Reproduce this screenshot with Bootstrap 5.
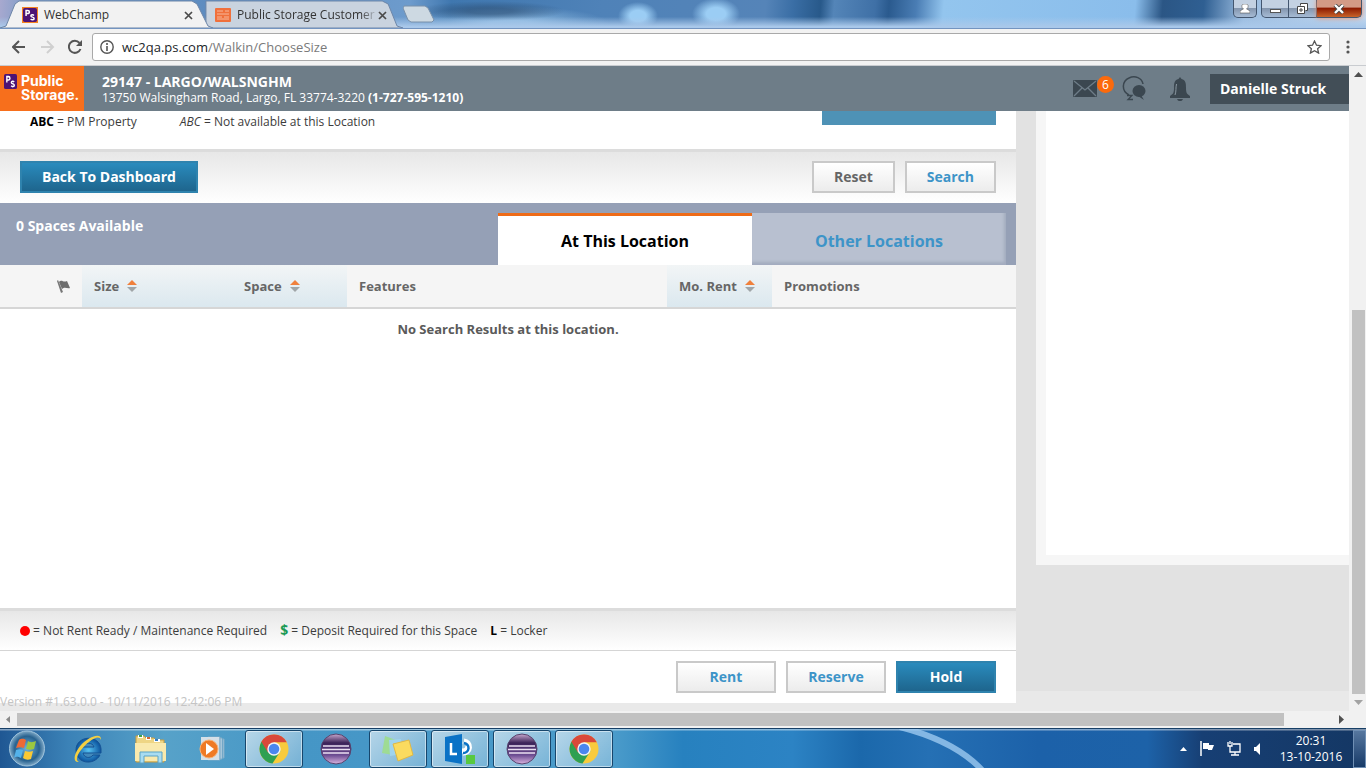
<!DOCTYPE html>
<html lang="en">
<head>
<meta charset="utf-8">
<meta name="viewport" content="width=device-width, initial-scale=1">
<title>WebChamp</title>
<link href="https://cdn.jsdelivr.net/npm/bootstrap@5.3.0/dist/css/bootstrap.min.css" rel="stylesheet">
<style>
  body { font-family: "Open Sans", "Noto Sans", sans-serif; font-size: 12px; line-height: 16px; color: #3c3c3c; background: #e2e2e2; }
  svg { display: block; flex: none; }
  button { font-family: inherit; }
  .plain { border: 0; background: none; padding: 0; }

  /* browser frame */
  .titlebar { height: 29px; flex: none; border-bottom: 1px solid #7394c0;
    background:
      linear-gradient(to bottom, transparent 60%, #a9c8ea 95%),
      radial-gradient(ellipse 20px 14px at 638px 16px, #9bcdf4 40%, transparent),
      radial-gradient(ellipse 24px 16px at 716px 14px, #9bcdf4 40%, transparent),
      radial-gradient(ellipse 75px 10px at 490px 11px, rgba(44,78,115,.6) 30%, transparent),
      radial-gradient(ellipse 100px 18px at 510px 24px, #8cb9e0 20%, transparent),
      linear-gradient(95deg, #a8a9cf 0, #7d9cc8 2%, #5d8cc0 15%, #6d9bcc 30%, #3f77af 33%, #4f82b8 44%, #5584b8 56%, #3a6ea5 58%, #28598a 60%, #5485b8 61%, #3f70a6 64%, #2a5a8e 65%, #4a7db4 67%, #93c5ee 69%, #8abdeb 83%, #2b5685 85%, #2f5f92 88%, #9cbde0 91%, #c4d8ee 100%); }
  .tab { height: 28px; position: relative; padding-left: 22px; padding-top: 2px; }
  .tab > .shape { position: absolute; left: 0; top: 0; width: 100%; height: 100%; }
  .tab > :not(.shape) { position: relative; }
  .tab-one { width: 213px; z-index: 1; }
  .tab-two { width: 202px; margin-left: -12px; padding-left: 14px; }
  .tab-label { color: #333; white-space: nowrap; overflow: hidden; padding-left: 6px; }
  .tab-two .tab-label { -webkit-mask-image: linear-gradient(to right, #000 88%, transparent); mask-image: linear-gradient(to right, #000 88%, transparent); }
  .winbtn { height: 18px; width: 28px; border: 1px solid #43566f; border-top: 0; background: linear-gradient(#c3d1e2 45%, #8496ae 50%, #a6bbd5); }
  .winbtn.user { width: 24px; border-radius: 0 0 5px 5px; }
  .winbtn.min { border-radius: 0 0 0 5px; }
  .winbtn.max { border-left: 0; }
  .winbtn.quit { width: 45px; border-radius: 0 0 5px 0; border-left: 0; background: linear-gradient(#d39a86 40%, #8e1c02 50%, #c8642a); box-shadow: 0 0 5px #f38b60; }
  .toolbar { height: 37px; flex: none; background: #f2f2f2; border-bottom: 1px solid #c9ccd0; }
  .omnibox { height: 28px; border: 1px solid #a9a9a9; border-radius: 3px; background: #fff; padding: 0 7px; }
  .address { font-size: 13px; line-height: 20px; color: #7a7a7a; }

  /* application header */
  .app-header { height: 45px; flex: none; background: #6e7d88; color: #fff; }
  .brand { width: 84px; height: 45px; background: #f76f1c; padding: 8px 0 0 4px; gap: 4px; color: #fff; }
  .brand-text { font: 700 14px/14px Inter, "Open Sans", sans-serif; }
  .site { padding: 2px 0 0 18px; }
  .site-name { font-size: 14px; font-weight: 700; }
  .count { width: 17px; height: 17px; border-radius: 50%; background: #fc6a0c; font-size: 12px; line-height: 17px; }
  .user-name { width: 139px; height: 30px; background: #424e57; color: #fff; font-size: 14px; font-weight: 700; padding: 0 10px; text-align: left; margin-left: 20px; }

  /* page */
  .viewport { min-height: 0; }
  .leftcol { background: #fff; margin-bottom: 8px; min-width: 0; }
  .page { background: linear-gradient(to top, #e9e9e9 20px, #e2e2e2 20px); }
  .aside-box { width: 313px; flex: none; height: 454px; margin-left: 20px; background: #fff; border: solid #f6f6f6; border-width: 0 0 10px 10px; }
  .legend { height: 38px; padding: 3px 20px 0 30px; gap: 43px; }
  .manage { width: 174px; height: 14px; margin-top: -3px; background: #4e92b6; }
  .shade { background: linear-gradient(#e7e7e7, #fff); border-top: 3px solid #dcdcdc; }
  .actions { height: 54px; padding: 0 20px 2px; gap: 10px; }
  .final { height: 52px; padding-bottom: 0; }
  .app-btn { height: 32px; border: 2px solid #c9c9c9; background: linear-gradient(#fff, #ececec); color: #3d94c8; font-size: 14px; line-height: 20px; font-weight: 700; padding: 0 20px; border-radius: 0; }
  .app-btn.grey { color: #666; }
  .app-btn.solid { border-color: #2f83ae; background: linear-gradient(#2a8bbd, #1e658d); color: #fff; }
  .app-btn.wide { width: 100px; padding: 0; }
  .tabstrip { height: 62px; background: #95a0b6; padding-right: 10px; }
  .spaces { padding: 15px 16px; color: #fff; font-size: 14px; font-weight: 700; }
  .loc { height: 52px; width: 254px; border: 0; font-size: 16px; font-weight: 700; padding: 4px 0 0; }
  .loc.here { background: #fff; border-top: 3px solid #ee6b17; color: #000; padding: 0; }
  .loc.other { background: #b8c0d0; color: #3d94c8; box-shadow: inset -2px -3px 3px #a3acbf; }
  .results { table-layout: fixed; width: 100%; font-size: 13px; color: #5a5a5a; }
  .results th { height: 43px; background: #f5f5f5; border-bottom: 2px solid #d6d6d6; padding: 0 12px; font-weight: 700; color: #666; }
  .results th.sortable { background: linear-gradient(#f2f5f6, #dbe8ef); }
  .results td { padding: 12px 0; text-align: center; font-weight: 700; }
  .keys { height: 43px; padding: 0 20px; border-bottom: 1px solid #d5d5d5; gap: 13px; }
  .reddot { display: inline-block; vertical-align: -1px; width: 10px; height: 10px; border-radius: 50%; background: #f00; }
  .dollar { color: #1c9a55; font-size: 14px; }
  .version { position: absolute; left: 0; bottom: 1px; color: #c4c4c4; }

  /* scrollbars */
  .vbar { width: 17px; flex: none; background: #f1f1f1; padding: 0 1px 0 2px; }
  .vthumb { background: #c1c1c1; width: 13px; }
  .hbar { height: 17px; flex: none; background: #f1f1f1; padding: 2px 0; }
  .hthumb { background: #c1c1c1; height: 13px; }

  /* taskbar */
  .taskbar { height: 40px; flex: none; border-top: 1px solid #173f66; gap: 4px; color: #fff; position: relative;
    background:
      linear-gradient(to bottom, rgba(255,255,255,.45) 1px, transparent 2px),
      linear-gradient(90deg, #1f5793 0, #3b82b7 5%, #57a2c9 12%, #4596c6 22%, #4a9bca 45%, #2781bf 50%, #2c83c4 58%, #1b68ab 63%, #2570b4 68%, #1c61a9 76%, #1d62a8 84%, #173f74 88%, #143764 100%); }
  .swoosh { position: absolute; left: 880px; top: 0; }
  .slot { width: 58px; height: 38px; }
  .slot.start { width: 55px; padding-left: 8px; }
  .slot.open { border: 1px solid #17466c; border-radius: 3px; background: linear-gradient(135deg, rgba(255,255,255,.6), rgba(255,255,255,.25)); box-shadow: inset 0 0 0 1px rgba(255,255,255,.5); }
  .tray { gap: 12px; padding-right: 6px; }
  .clock { width: 76px; }
  .peek { width: 13px; flex: none; height: 38px; border: 1px solid #6f8fb4; background: linear-gradient(#56779f, #173a68); }
</style>
</head>
<body class="vh-100 d-flex flex-column overflow-hidden">

<svg width="0" height="0" class="position-absolute" aria-hidden="true">
  <defs>
    <symbol id="cross" viewBox="0 0 9 9"><path d="M1 1l7 7M8 1L1 8" stroke="#4a4a4a" stroke-width="1.7"/></symbol>
    <symbol id="sort" viewBox="0 0 10 12"><path d="M0 5l5-5 5 5z" fill="#f0803c"/><path d="M0 7h10l-5 5z" fill="#a0a5a8"/></symbol>
    <symbol id="ps" viewBox="0 0 16 16"><rect width="16" height="16" rx="2" fill="#4d1374"/><path d="M3.500 9V2.800h2a1.700 1.700 0 0 1 0 3.600h-2M12.500 8.500c-1-1.200-3.500-1-3.500.6 0 1.700 3.700 1 3.700 2.900 0 1.700-2.700 1.900-3.900.5" fill="none" stroke="#fff" stroke-width="1.700"/></symbol>
    <symbol id="chrome" viewBox="0 0 30 30"><circle cx="15" cy="15" r="14.5" fill="#f8cb3d"/><path d="M15 15L2.4 7.8A14.5 14.5 0 0 0 13.500 29.4L21.500 17z" fill="#2fa052"/><path d="M2.400 7.800A14.500 14.500 0 0 1 27.800 8.300H15L9 18.500z" fill="#d9483a"/><circle cx="15" cy="15" r="6.700" fill="#f4f4f4"/><circle cx="15" cy="15" r="5.300" fill="#4b86ee"/></symbol>
    <linearGradient id="plum" x2="0" y2="1"><stop offset="0" stop-color="#c9a9cf"/><stop offset=".3" stop-color="#3b2258"/><stop offset=".7" stop-color="#6b4b92"/><stop offset="1" stop-color="#dab5e0"/></linearGradient>
    <symbol id="eclipse" viewBox="0 0 32 32"><circle cx="16" cy="16" r="15" fill="url(#plum)" stroke="#57436d"/><path d="M3 13h26M2 16.500h28M3 20h26" stroke="#eadff2" stroke-width="1.600"/></symbol>
    <radialGradient id="orb"><stop offset="0" stop-color="#71b5dd"/><stop offset=".7" stop-color="#28628f"/><stop offset="1" stop-color="#7fa9c7"/></radialGradient>
    <radialGradient id="ieball"><stop offset="0" stop-color="#57c3f2"/><stop offset="1" stop-color="#0c559f"/></radialGradient>
  </defs>
</svg>

<div class="titlebar d-flex">
  <div class="tab tab-one d-flex align-items-center">
    <svg class="shape" viewBox="0 0 213 28" preserveAspectRatio="none"><path d="M0 28L6 26 15 4 19 1H192L197 4 208 26 213 28z" fill="#f2f2f2" stroke="#6d86a8"/></svg>
    <svg width="16" height="16" viewBox="0 0 16 16"><rect width="16" height="16" fill="#f58220"/><use href="#ps" x="1" y="1" width="14" height="14"/></svg>
    <span class="tab-label flex-grow-1">WebChamp</span>
    <button class="plain me-3" aria-label="Close tab"><svg width="9" height="9" class="me-1"><use href="#cross"/></svg></button>
  </div>
  <div class="tab tab-two d-flex align-items-center">
    <svg class="shape" viewBox="0 0 204 28" preserveAspectRatio="none"><path d="M-1 28L5 22V1H183L189 4 198 26 204 28z" fill="#c9d3df" stroke="#6d86a8"/></svg>
    <svg width="16" height="14" viewBox="0 0 16 14"><rect width="16" height="14" rx="1" fill="#f0703c"/><path d="M2 3h6M10 3h4M2 6h12M2 9h5M9 9h5M2 11h12" stroke="#f7b79b"/></svg>
    <span class="tab-label flex-grow-1">Public Storage Customer</span>
    <button class="plain me-3" aria-label="Close tab"><svg width="9" height="9"><use href="#cross"/></svg></button>
  </div>
  <button class="plain align-self-center" aria-label="New tab"><svg width="34" height="18" viewBox="0 0 34 18"><path d="M1 1H22l3 2 6 12-2 2H8L5 15 0 3z" fill="#cdd9e2" stroke="#7890aa"/></svg></button>
  <div class="ms-auto d-flex me-1">
    <button class="winbtn user p-0 me-1 d-flex justify-content-center align-items-center" aria-label="Profile"><svg width="10" height="10" viewBox="0 0 10 10"><path d="M5 0a2.500 2.500 0 0 1 1.500 4.800L10 7v2H0V7l3.500-2.200A2.500 2.500 0 0 1 5 0z" fill="#fff" stroke="#555" stroke-width=".6"/></svg></button>
    <button class="winbtn min p-0 d-flex justify-content-center align-items-center" aria-label="Minimise"><svg width="11" height="10"><rect x=".5" y="5.500" width="10" height="3" fill="#fff" stroke="#555"/></svg></button>
    <button class="winbtn max p-0 d-flex justify-content-center align-items-center" aria-label="Restore"><svg width="11" height="11" viewBox="0 0 11 11"><path d="M3.500 2.500v-2h7v7h-2M.5 3.500h7v7h-7zM3 6h2v2H3z" fill="#fff" stroke="#444"/></svg></button>
    <button class="winbtn quit p-0 d-flex justify-content-center align-items-center" aria-label="Close"><svg width="12" height="10" viewBox="0 0 12 10"><path d="M2 1l8 8M10 1L2 9" stroke="#444" stroke-width="4"/><path d="M2 1l8 8M10 1L2 9" stroke="#fff" stroke-width="2.400"/></svg></button>
  </div>
</div>

<div class="toolbar d-flex align-items-center px-2">
  <button class="plain ms-1" aria-label="Back"><svg width="16" height="14" viewBox="0 0 16 14"><path d="M7 1L1 7l6 6M1 7h12" fill="none" stroke="#555" stroke-width="2"/></svg></button>
  <button class="plain ms-2 ps-1" aria-label="Forward"><svg width="16" height="14" viewBox="0 0 16 14"><path d="M7 1l6 6-6 6M13 7H1" fill="none" stroke="#d0d0d0" stroke-width="2"/></svg></button>
  <button class="plain ms-2 ps-1" aria-label="Reload"><svg width="16" height="16" viewBox="0 0 16 16"><path d="M12.500 10A6 6 0 1 1 11.500 4" fill="none" stroke="#555" stroke-width="2"/><path d="M14 1v6H8z" fill="#555"/></svg></button>
  <div class="omnibox d-flex align-items-center flex-grow-1 ms-2 me-3">
    <svg width="14" height="14" viewBox="0 0 14 14"><circle cx="7" cy="7" r="6.200" fill="none" stroke="#555" stroke-width="1.400"/><path d="M7 6v5M7 3v2" stroke="#555" stroke-width="1.600"/></svg>
    <div class="address flex-grow-1 ms-2" role="textbox" aria-label="Address"><span class="text-dark">wc2qa.ps.com</span>/Walkin/ChooseSize</div>
    <button class="plain" aria-label="Bookmark"><svg width="15" height="14" viewBox="0 0 15 14"><path d="M7.500 1l2 4.200 4.500.5-3.400 3 1 4.400-4.100-2.300L3.400 13.100l1-4.400L1 5.700l4.500-.5z" fill="none" stroke="#555" stroke-width="1.300"/></svg></button>
  </div>
  <button class="plain me-2" aria-label="Menu"><svg width="4" height="14" viewBox="0 0 4 14" fill="#555"><circle cx="2" cy="2" r="1.600"/><circle cx="2" cy="7" r="1.600"/><circle cx="2" cy="12" r="1.600"/></svg></button>
</div>

<div class="viewport d-flex flex-grow-1">
  <div class="d-flex flex-column flex-grow-1 position-relative">
    <header class="app-header d-flex align-items-center">
      <a href="#" class="brand d-flex text-decoration-none">
        <svg width="13" height="15" viewBox="0 0 16 16" preserveAspectRatio="none"><use href="#ps"/></svg>
        <span class="brand-text">Public<br>Storage.</span>
      </a>
      <div class="site flex-grow-1">
        <div class="site-name">29147 - LARGO/WALSNGHM</div>
        <div>13750 Walsingham Road, Largo, FL 33774-3220 <b>(1-727-595-1210)</b></div>
      </div>
      <button class="plain" aria-label="Messages"><svg width="24" height="18" viewBox="0 0 24 18"><rect width="24" height="17" rx="1" fill="#3b4750"/><path d="M1 1l11 9L23 1M1 16l8-8M23 16l-8-8" fill="none" stroke="#6e7d88" stroke-width="1.300"/></svg></button>
      <span class="count text-center mb-2">6</span>
      <button class="plain ms-2" aria-label="Chat"><svg width="24" height="25" viewBox="0 0 24 25"><path d="M7 19C-1 15 0 5 7 2c6-3 13 0 14 6" fill="none" stroke="#3b4750" stroke-width="1.500"/><ellipse cx="17" cy="15" rx="6.500" ry="6" fill="#3b4750"/><path d="M19 19l3 5-6-4z" fill="#3b4750"/><path d="M5 19.500h5l-4 4h5" fill="none" stroke="#3b4750" stroke-width="1.300"/></svg></button>
      <button class="plain ms-4" aria-label="Alerts"><svg width="20" height="24" viewBox="0 0 20 24"><path d="M10 0l1.500 2C16 3 16 7 16 11c0 5 1 6 4 8v2H0v-2c3-2 4-3 4-8 0-4 0-8 4.500-9zM7 22h6c-1 3-5 3-6 0z" fill="#3b4750"/><path d="M6.500 7C5.500 11 6.500 14 5 18" fill="none" stroke="#8b98a2"/></svg></button>
      <button class="user-name border-0">Danielle Struck</button>
    </header>

    <div class="page d-flex flex-grow-1 align-items-start">
      <main class="leftcol d-flex flex-column flex-grow-1 align-self-stretch">
        <div class="legend d-flex">
          <span><b class="text-black">ABC</b> = PM Property</span>
          <span><i>ABC</i> = Not available at this Location</span>
          <div class="manage ms-auto"></div>
        </div>
        <div class="shade actions d-flex align-items-center">
          <button class="app-btn solid me-auto">Back To Dashboard</button>
          <button class="app-btn grey">Reset</button>
          <button class="app-btn">Search</button>
        </div>
        <div class="tabstrip d-flex align-items-end">
          <div class="spaces flex-grow-1 align-self-start">0 Spaces Available</div>
          <button class="loc here">At This Location</button>
          <button class="loc other">Other Locations</button>
        </div>
        <table class="results">
          <colgroup><col style="width:82px"><col style="width:150px"><col style="width:115px"><col style="width:320px"><col style="width:105px"><col></colgroup>
          <thead><tr>
            <th><svg width="13" height="13" viewBox="0 0 13 13" class="ms-auto" role="img" aria-label="Flag"><path d="M0 1l1-1 5 12-2 1z" fill="#777"/><path d="M2 2c3-3 4 1 8-1l3 7c-3 1-5-2-8 1z" fill="#6e6e6e"/></svg></th>
            <th class="sortable"><div class="d-flex align-items-center gap-2">Size <svg width="10" height="12"><use href="#sort"/></svg></div></th>
            <th class="sortable"><div class="d-flex align-items-center gap-2">Space <svg width="10" height="12"><use href="#sort"/></svg></div></th>
            <th>Features</th>
            <th class="sortable"><div class="d-flex align-items-center gap-2 text-nowrap">Mo. Rent <svg width="10" height="12"><use href="#sort"/></svg></div></th>
            <th>Promotions</th>
          </tr></thead>
          <tbody><tr><td colspan="6">No Search Results at this location.</td></tr></tbody>
        </table>
        <div class="mt-auto">
          <div class="shade keys d-flex align-items-center">
            <span><span class="reddot"></span> = Not Rent Ready / Maintenance Required</span>
            <span><b class="dollar">$</b> = Deposit Required for this Space</span>
            <span><b class="text-black">L</b> = Locker</span>
          </div>
          <div class="actions final d-flex align-items-center justify-content-end">
            <button class="app-btn wide">Rent</button>
            <button class="app-btn wide">Reserve</button>
            <button class="app-btn wide solid">Hold</button>
          </div>
        </div>
      </main>
      <aside class="aside-box"></aside>
    </div>
    <div class="version">Version #1.63.0.0 - 10/11/2016 12:42:06 PM</div>
  </div>
  <div class="vbar d-flex flex-column align-items-center">
    <svg width="9" height="17" viewBox="0 0 9 17"><path d="M0 11l4.500-5L9 11z" fill="#505050"/></svg>
    <div style="flex:227"></div><div class="vthumb" style="flex:384"></div>
    <svg width="9" height="17" viewBox="0 0 9 17"><path d="M0 6l4.500 5L9 6z" fill="#a3a3a3"/></svg>
  </div>
</div>
<div class="hbar d-flex align-items-center">
  <svg width="17" height="9" viewBox="0 0 17 9"><path d="M10 1v7L6 4.500z" fill="#8a8a8a"/></svg>
  <div class="hthumb" style="flex:1267"></div><div style="flex:48"></div>
  <svg width="17" height="9" viewBox="0 0 17 9"><path d="M7 0v9l5-4.500z" fill="#505050"/></svg>
  <div class="vbar"></div>
</div>

<footer class="taskbar d-flex align-items-center">
  <svg class="swoosh" width="130" height="39" viewBox="0 0 130 39"><path d="M20 -2Q75 12 102 41" fill="none" stroke="#9cc9f0" stroke-width="6" opacity=".8"/></svg>
  <button class="slot start plain d-flex align-items-center" aria-label="Start"><svg width="38" height="37" viewBox="0 0 38 37"><circle cx="19" cy="18.500" r="17.500" fill="url(#orb)" stroke="#9dc2db"/><path d="M11 10c3-2 5-1 7 0l-2 8c-3-1-5-1-8 0z" fill="#ee6a35"/><path d="M20 11c3 2 5 1 8 0l-2 8c-3 1-5 1-8 0z" fill="#9bc840"/><path d="M8 20c3-1 5-1 7 0l-2 8c-3-1-4-2-7 0z" fill="#54b2ea"/><path d="M17 21c3 1 5 1 8 0l-2 8c-3 1-5 1-8-1z" fill="#fbc934"/></svg></button>
  <button class="slot plain d-flex align-items-center justify-content-center" aria-label="Internet Explorer"><svg width="30" height="32" viewBox="0 0 30 32"><path d="M27 20H10c1 5 7 6 10 2h7C21 33 3 31 3 17 3 2 27 1 28 16v4zM10 14h11c-1-5-10-5-11 0z" fill="url(#ieball)" stroke="#155294"/><path d="M28 7C29-1 16 3 8 12 1 20-1 30 6 29 0 27 8 15 16 9c6-5 11-6 12-2z" fill="#f4cf42"/></svg></button>
  <button class="slot plain d-flex align-items-center justify-content-center" aria-label="Explorer"><svg width="33" height="30" viewBox="0 0 33 30"><path d="M2 2h8l2 2h8l2 2h8v22H2z" fill="#eed584" stroke="#c69c43"/><path d="M4 1h5v3H4zM12 3h5v3h-5zM20 5h6v3h-6z" fill="#fff"/><path d="M5 1h3v2H5z" fill="#41a348"/><path d="M13 3h3v2h-3z" fill="#d26632"/><path d="M21 5h3v2h-3z" fill="#3b7ec2"/><path d="M1 9h31v18H1z" fill="#f9e9ad"/><path d="M6 29V18h22v11h-4v-7H10v7z" fill="#a9dcf1" stroke="#5aa3c6"/></svg></button>
  <button class="slot plain d-flex align-items-center justify-content-center" aria-label="Media Player"><svg width="26" height="26" viewBox="0 0 26 26"><path d="M9 1h12v23H9zM21 2h2v21h-2zM24 3h1v19h-1z" fill="#cfe3ef" stroke="#7fabc7"/><rect x="2" y="1" width="18" height="23" fill="#d5e0e8"/><circle cx="10" cy="13" r="9" fill="#ef7a25" stroke="#f7b176"/><path d="M7 7l8 6-8 6z" fill="#fff"/></svg></button>
  <button class="slot open p-0 d-flex align-items-center justify-content-center" aria-label="Chrome"><svg width="30" height="30"><use href="#chrome"/></svg></button>
  <button class="slot plain d-flex align-items-center justify-content-center" aria-label="Eclipse"><svg width="32" height="32"><use href="#eclipse"/></svg></button>
  <button class="slot open p-0 d-flex align-items-center justify-content-center" aria-label="Sticky Notes"><svg width="32" height="26" viewBox="0 0 32 26"><path d="M3 0l11 4-3 15-11-2z" fill="#9edb94"/><path d="M7 4l12-1 2 15-13 2z" fill="#9fd4ee"/><path d="M11 8l16-4 4 15-15 6z" fill="#fadb5f" stroke="#e1b844"/></svg></button>
  <button class="slot open p-0 d-flex align-items-center justify-content-center" aria-label="Lync"><svg width="32" height="32" viewBox="0 0 32 32"><path d="M20 8a6 6 0 1 1-1 12M24 13a5 5 0 1 1-6-5" fill="none" stroke="#fff" stroke-width="5"/><path d="M20 10a5 5 0 1 1-1 10" fill="none" stroke="#0a72c6" stroke-width="2.500"/><path d="M1 4l17-3v30L1 28z" fill="#0a72c6"/><path d="M7 10v11h6" fill="none" stroke="#fff" stroke-width="2.500"/><path d="M22 22h9v9h-9z" fill="#58c940"/></svg></button>
  <button class="slot open p-0 d-flex align-items-center justify-content-center" aria-label="Eclipse"><svg width="32" height="32"><use href="#eclipse"/></svg></button>
  <button class="slot open p-0 d-flex align-items-center justify-content-center" aria-label="Chrome"><svg width="30" height="30"><use href="#chrome"/></svg></button>
  <div class="tray ms-auto d-flex align-items-center">
    <svg width="9" height="6" viewBox="0 0 9 6"><path d="M1 5l3.500-4L8 5z" fill="#fff"/></svg>
    <svg width="15" height="15" viewBox="0 0 15 15"><path d="M1 0v15" stroke="#fff" stroke-width="1.500"/><path d="M3 2h6v2h5l-2 5H8V8H3z" fill="#fff"/></svg>
    <svg width="14" height="15" viewBox="0 0 14 15"><path d="M6 3h7v8H3V8M8 11v3M4 14h8M1 1v4h4V1M3 0v3M3 5v3" fill="none" stroke="#fff" stroke-width="1.300"/></svg>
    <svg width="10" height="14" viewBox="0 0 10 14"><path d="M1 5h2l4-4v12L3 9H1z" fill="#fff"/></svg>
  </div>
  <div class="clock text-center">20:31<br>13-10-2016</div>
  <button class="peek p-0" aria-label="Show desktop"></button>
</footer>
<script src="https://cdn.jsdelivr.net/npm/bootstrap@5.3.0/dist/js/bootstrap.bundle.min.js"></script>
</body>
</html>
